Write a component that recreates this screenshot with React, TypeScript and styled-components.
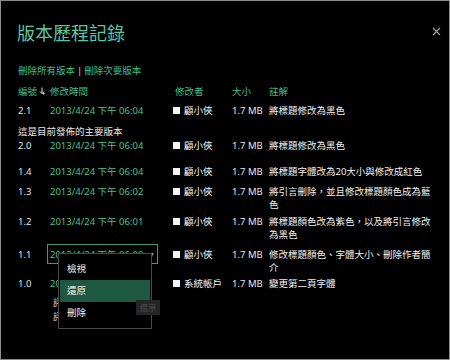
import React from 'react';
import styled, { createGlobalStyle } from 'styled-components';

const GlobalStyle = createGlobalStyle`
  html, body {
    margin: 0;
    padding: 0;
    background: #000;
  }
`;

const Dialog = styled.div`
  position: relative;
  box-sizing: border-box;
  width: 450px;
  height: 360px;
  background: #000;
  border: 1px solid #8c8c8c;
  padding: 20px 18px 0 16px;
  font-family: "Noto Sans", "Noto Sans CJK TC", sans-serif;
  font-size: 9.5px;
  color: #e6e6e6;
  overflow: hidden;
`;

const Title = styled.h1`
  margin: 0;
  font-size: 18px;
  line-height: 24px;
  font-weight: 400;
  color: #5cc6a4;
`;

const CloseButton = styled.button`
  position: absolute;
  top: 24px;
  right: 7px;
  width: 12px;
  height: 12px;
  padding: 0;
  border: none;
  background: none;
  display: flex;
  align-items: center;
  justify-content: center;
`;

const LinkBar = styled.div`
  margin-top: 18.5px;
  padding-left: 1px;
  line-height: 13px;
  display: flex;
  gap: 2px;
`;

const Link = styled.span`
  color: #3fbf8c;
`;

const Divider = styled.span`
  color: #d0d0d0;
`;

const Table = styled.div`
  margin-top: 8px;
  padding-left: 1px;
  position: relative;
`;

const Row = styled.div<{ $mt?: number }>`
  display: grid;
  grid-template-columns: 32px 125px 57px 37px 1fr;
  align-items: start;
  line-height: 13px;
  margin-top: ${(p) => p.$mt ?? 0}px;
`;

const HeadCell = styled.div`
  color: #3fbf8c;
  display: flex;
  align-items: center;
  gap: 2px;
`;

const Num = styled.div`
  color: #dfe6ec;
`;

const DateCell = styled.div`
  position: relative;
  color: #47c48b;
`;

const DateBox = styled.div`
  position: absolute;
  left: -3px;
  top: -4px;
  width: 109px;
  height: 18px;
  border: 1px solid #3c9a76;
`;

const Caret = styled.span`
  position: absolute;
  right: 3px;
  top: 4px;
  font-size: 6px;
  color: #9a9a9a;
`;

const Author = styled.div`
  display: flex;
  align-items: center;
  height: 13px;
  gap: 4px;
  margin-left: -2px;
  color: #f0f0f0;
`;

const Box = styled.span`
  display: inline-block;
  width: 7px;
  height: 7px;
  background: #f4f4f4;
`;

const Size = styled.div`
  color: #e6e6e6;
`;

const Note = styled.div`
  color: #f0f0f0;
`;

const Banner = styled.div<{ $mt?: number }>`
  margin-top: ${(p) => p.$mt ?? 0}px;
  line-height: 13px;
  color: #e8e8e8;
`;

const Extra = styled.div`
  margin-top: 6px;
  padding-left: 35px;
  display: flex;
  align-items: flex-start;
`;

const ExtraLines = styled.div`
  width: 83px;
  line-height: 14px;
  color: #e6e6e6;
`;

const GhostButton = styled.div`
  position: relative;
  z-index: 3;
  margin-top: 4px;
  width: 24px;
  height: 15px;
  background: #262626;
  color: #4a4a4a;
  font-size: 8px;
  line-height: 15px;
  text-align: center;
`;

const Menu = styled.div`
  position: absolute;
  z-index: 2;
  left: 8px;
  top: 5px;
  width: 90px;
  padding: 4px 1px;
  background: #000;
  border: 1px solid #4a4a4a;
`;

const MenuItem = styled.div<{ $active?: boolean }>`
  height: 22px;
  line-height: 22px;
  padding-left: 7px;
  color: #f2f2f2;
  background: ${(p) => (p.$active ? '#1d5842' : 'transparent')};
`;

type Version = {
  num: string;
  date: string;
  author: string;
  note: string;
  mt: number;
};

const versions: Version[] = [
  { num: '2.0', date: '2013/4/24 下午 06:04', author: '顧小俠', note: '將標題修改為黑色', mt: 1 },
  { num: '1.4', date: '2013/4/24 下午 06:04', author: '顧小俠', note: '將標題字體改為20大小與修改成紅色', mt: 13 },
  { num: '1.3', date: '2013/4/24 下午 06:02', author: '顧小俠', note: '將引言刪除，並且修改標題顏色成為藍色', mt: 7 },
  { num: '1.2', date: '2013/4/24 下午 06:01', author: '顧小俠', note: '將標題顏色改為紫色，以及將引言修改為黑色', mt: 4 },
];

const SortIcon = () => (
  <svg width="6" height="8" viewBox="0 0 6 8">
    <path d="M3 0.5V6.5M1 4.5L3 6.5L5 4.5" stroke="#e0e0e0" strokeWidth="1" fill="none" />
    <circle cx="4.6" cy="6.6" r="1" fill="#e0e0e0" />
  </svg>
);

const App: React.FC = () => {
  return (
    <>
      <GlobalStyle />
      <Dialog>
        <Title>版本歷程記錄</Title>
        <CloseButton aria-label="close">
          <svg width="9" height="9" viewBox="0 0 9 9">
            <path d="M1 1L8 8M8 1L1 8" stroke="#9c9c9c" strokeWidth="1.3" />
          </svg>
        </CloseButton>
        <LinkBar>
          <Link>刪除所有版本</Link>
          <Divider>|</Divider>
          <Link>刪除次要版本</Link>
        </LinkBar>
        <Table>
          <Row>
            <HeadCell>
              編號
              <SortIcon />
            </HeadCell>
            <HeadCell>修改時間</HeadCell>
            <HeadCell>修改者</HeadCell>
            <HeadCell>大小</HeadCell>
            <HeadCell>註解</HeadCell>
          </Row>
          <Row $mt={6}>
            <Num>2.1</Num>
            <DateCell>2013/4/24 下午 06:04</DateCell>
            <Author>
              <Box />
              顧小俠
            </Author>
            <Size>1.7 MB</Size>
            <Note>將標題修改為黑色</Note>
          </Row>
          <Banner $mt={8}>這是目前發佈的主要版本</Banner>
          {versions.map((v) => (
            <Row key={v.num} $mt={v.mt}>
              <Num>{v.num}</Num>
              <DateCell>{v.date}</DateCell>
              <Author>
                <Box />
                {v.author}
              </Author>
              <Size>1.7 MB</Size>
              <Note>{v.note}</Note>
            </Row>
          ))}
          <Row $mt={7}>
            <Num>1.1</Num>
            <DateCell>
              <DateBox>
                <Caret>▼</Caret>
              </DateBox>
              2013/4/24 下午 06:00
              <Menu>
                <MenuItem>檢視</MenuItem>
                <MenuItem $active>還原</MenuItem>
                <MenuItem>刪除</MenuItem>
              </Menu>
            </DateCell>
            <Author>
              <Box />
              顧小俠
            </Author>
            <Size>1.7 MB</Size>
            <Note>修改標題顏色、字體大小、刪除作者簡介</Note>
          </Row>
          <Row $mt={3}>
            <Num>1.0</Num>
            <DateCell>2013/4/24 下午 05:58</DateCell>
            <Author>
              <Box />
              系統帳戶
            </Author>
            <Size>1.7 MB</Size>
            <Note>變更第二頁字體</Note>
          </Row>
          <Extra>
            <ExtraLines>
              評論：初稿
              <br />
              評分：無
            </ExtraLines>
            <GhostButton>還原</GhostButton>
          </Extra>
        </Table>
      </Dialog>
    </>
  );
};

export default App;
